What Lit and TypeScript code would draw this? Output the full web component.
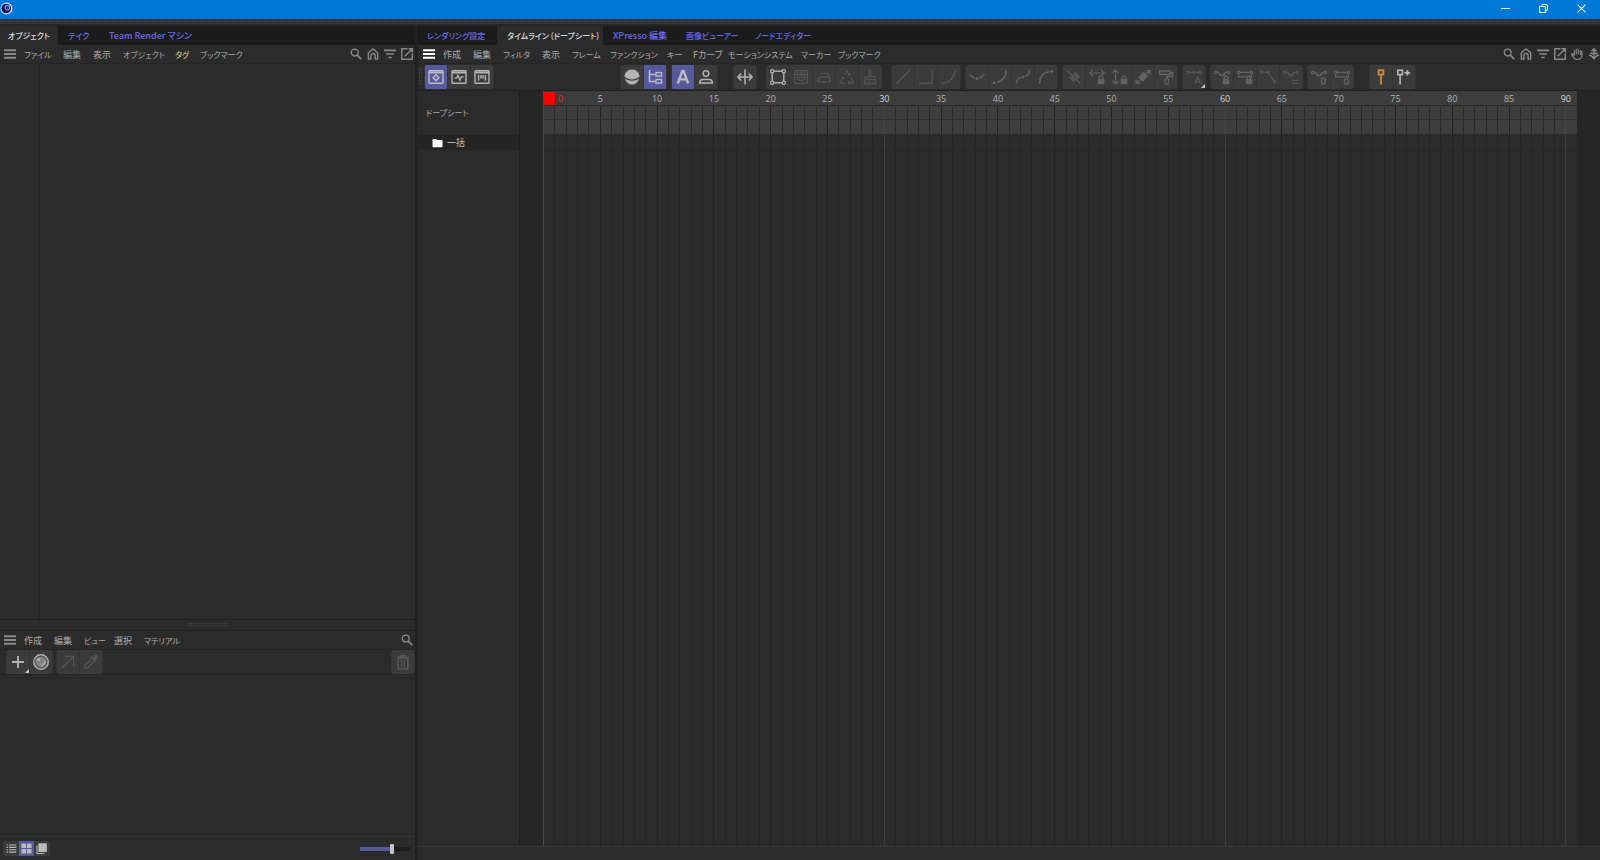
import { LitElement, html, css, svg, nothing } from "lit";
import { customElement, property, state } from "lit/decorators.js";
import { classMap } from "lit/directives/class-map.js";

const key = svg`<circle cx="1.6" cy="3.4" r="1.2"/><circle cx="14.4" cy="3.4" r="1.2"/>`;
const lock = svg`<rect class="f" x="8.6" y="10" width="6.8" height="5.2" rx="1"/><path d="M10.2 10V8.6a1.8 1.8 0 0 1 3.6 0V10" stroke-width="1.3"/>`;
const frame = svg`<rect x="1" y="1.8" width="14" height="12.4" rx="0.8" stroke-width="1.4"/><path d="M1 3.4h14" stroke-width="2"/>`;
const dip = svg`<path d="M2.8 3.4h2.4M10.8 3.4h2.4"/><path d="M4.8 3.8Q8 9.4 11.2 3.8" stroke-width="1.8"/>`;

const icons: Record<string, unknown> = {
  menu: svg`<path d="M0 3h16M0 8h16M0 13h16" stroke-width="2.4"/>`,
  search: svg`<circle cx="6.3" cy="6" r="4.6" stroke-width="1.8"/><path d="M9.6 9.4l5.4 5.4" stroke-width="2.2"/>`,
  home: svg`<path d="M1.8 14.8V6.4L8 1.2l6.2 5.2v8.4h-3.4v-4.6a2.8 2.8 0 0 0-5.6 0v4.6z" stroke-width="1.9"/>`,
  filter: svg`<path d="M0 3.2h16M3 8h10M5.8 12.6h4.4" stroke-width="2.2"/>`,
  open: svg`<path d="M8.6 1H1v14h14V7.4M10 1h5v5M14.8 1.2L5 11" stroke-width="1.9"/>`,
  hand: svg`<path d="M4.4 9.6V3.4M7 8V1.4M9.8 8V1.4M12.6 8.6V3.4" stroke-width="1.5" stroke-linecap="round"/><path d="M4.4 9.8L1.8 7.6Q.4 8 1 9.2l3 4.4q1.4 1.6 4 1.6 6.6 0 6.6-6V5q-.8-1-1.8 0" stroke-width="1.6"/>`,
  dock: svg`<path d="M8 1v13.5M4.8 4.2L8 1l3.2 3.2M3 7.4h10M1.4 9.8q2.6-.6 6.6 4.6 4-5.2 6.6-4.6" stroke-width="1.9"/>`,
  dope: svg`${frame}<path d="M8 5.8l2.9 2.9L8 11.6 5.1 8.7z" stroke-width="1.5"/>`,
  fcurve: svg`${frame}<path d="M3.4 9.2h2L7 6.2l2 5 1.4-3.4h2.2" stroke-width="1.3"/>`,
  motion: svg`${frame}<path d="M4.6 6v5.6M11.4 6v5.6M7 6v3.6M9 6v3.6" stroke-width="1.4"/>`,
  ball: svg`<path class="f" d="M.5 7.6a7.5 7.2 0 0 1 15 0Q13 10.4 8 10.4T.5 7.6z"/><path class="f" d="M.9 9.6q3 2.2 7.1 2.2t7.1-2.2Q13.4 15.6 8 15.6T.9 9.6z"/>`,
  tree: svg`<path d="M2.5 1v11.5h6M2.5 5.5h6" stroke-width="1.6"/><rect x="9" y="3.5" width="5.5" height="3.6" stroke-width="1.4"/><rect x="9" y="10.5" width="5.5" height="3.6" stroke-width="1.4"/>`,
  auto: svg`<path d="M2.8 14.5L7.4 2h1.2l4.6 12.5M4.8 10.4h6.4" stroke-width="2.4"/>`,
  person: svg`<circle cx="8" cy="4.6" r="2.8" stroke-width="1.5"/><path d="M1.6 14q0-3.6 3.6-3.6h5.6q3.6 0 3.6 3.6z" stroke-width="1.5"/>`,
  split: svg`<path d="M8 .6v14.8M1 8h14M4.2 4.6L.9 8l3.3 3.4M11.8 4.6L15.1 8l-3.3 3.4" stroke-width="1.5"/>`,
  region: svg`<rect x="2.2" y="2.2" width="11.6" height="11.6" stroke-width="1.4"/><g class="k"><circle cx="2.2" cy="2.2" r="1.6"/><circle cx="13.8" cy="2.2" r="1.6"/><circle cx="2.2" cy="13.8" r="1.6"/><circle cx="13.8" cy="13.8" r="1.6"/></g>`,
  oven: svg`<rect x="1.6" y="1.6" width="12.8" height="12.8" rx="1"/><path d="M1.6 5.6h12.8"/><path d="M4 3.6h1.6M7.2 3.6h1.6M10.4 3.6H12" stroke-width="1.6"/><path d="M4.4 8.2h7.2v2q-3.6 2.4-7.2 0z"/>`,
  iron: svg`<path d="M1.4 12.8q.4-4.6 5-4.8h7l1 4.8zM5 4.2h6.6q1 0 1.2 1l.6 2.8" stroke-width="1.3"/>`,
  recycle: svg`<path d="M5.4 6.2L8 1.8l2.6 4.4M8.8 5.6l2 .8.4-2.2M4 8.4L1.2 13.8h5.2M2.4 9l1.8-.8.8 1.6M12 8.4l2.8 5.4H9.6M11.2 12l-1.8 1.8 1.8 1.6"/>`,
  broom: svg`<path d="M7 1h2v6.6H7zM3 7.8h10v2.8H3zM3 10.8L2.4 15h11.2L13 10.8M5.4 12.6V15M8 12.6V15M10.6 12.6V15"/>`,
  line: svg`<path d="M1.4 14.6L14.6 1.4" stroke-width="1.4"/>`,
  step: svg`<path d="M1 14.2h13.2V1.4" stroke-width="1.5"/>`,
  ease: svg`<path d="M1.4 14.4Q11.4 14 14.6 1.4" stroke-width="1.5"/>`,
  valley: svg`<path d="M.6 5Q3 8 5.8 9.2M10.2 9.2q2.8-1.2 5.2-4.2" stroke-width="1.5"/><circle class="f" cx="8" cy="9.8" r="1.4"/>`,
  easeout: svg`<path d="M5 13.2Q13.6 12 14.4 1.4" stroke-width="1.5"/><circle class="f" cx="2.2" cy="13.8" r="1.5"/>`,
  scurve: svg`<path d="M1.4 14.6Q2 9 5.8 8.4M10.2 7.4Q14 6.4 14.6 1.4" stroke-width="1.5"/><circle class="f" cx="8" cy="8" r="1.5"/>`,
  easein: svg`<path d="M1.6 14.6Q2 4 11.2 2.8" stroke-width="1.5"/><circle class="f" cx="14" cy="2.2" r="1.5"/>`,
  mute: svg`<path d="M1.4 1.6l13 13" stroke-width="1.6"/><path class="f" d="M9.2 2.6L7.4 6l4.2 4.2 2.4-2.6zM2.4 7.4l3.6-.2 4 4-2.6 2.6z"/>`,
  lockh: svg`<path d="M.8 4h14.4M3.8 1L.8 4l3 3M12.2 1l3 3-3 3"/>${lock}`,
  lockv: svg`<path d="M3.6 1v14M.6 4l3-3 3 3M.6 12l3 3 3-3"/>${lock}`,
  swap: svg`<path class="f" d="M8.5 2.4l4.7 4.4-5.6 6.4-4.8-4.6z"/><path d="M10.8 1.6h4v4M1.2 10.4v4h4M14.6 1.8l-3 3M1.4 14.2l3-3" stroke-width="1.4"/>`,
  roller: svg`<path d="M1.6 2h10.6v3.6H1.6zM12.2 3.6h2.4v4H8.8v2" stroke-width="1.5"/><rect x="7.2" y="9.6" width="3.2" height="5.6" rx="1" stroke-width="1.4"/>`,
  keysA: svg`${key}<path d="M3 3.4h10"/><circle class="f" cx="8" cy="3.4" r="1.5"/><path d="M8.8 15l2.8-6.8h.4l2.8 6.8M9.8 12.8h4" stroke-width="1.3"/>`,
  keyslock: svg`${key}${dip}${lock}`,
  spanlock: svg`${key}<path d="M2.8 3.4h10.4M1.6 5.4v2.4h12.8V5.4"/>${lock}`,
  diag: svg`<circle cx="1.6" cy="3.4" r="1.2"/><circle cx="14.4" cy="12.8" r="1.2"/><circle class="f" cx="8" cy="3.4" r="1.6"/><path d="M2.8 3.4h4M8.6 4.4l4.8 7.2"/>`,
  keyseq: svg`${key}${dip}<path d="M8.6 11.4h6.4M8.6 14.4h6.4"/>`,
  keyszero: svg`${key}${dip}<ellipse cx="12.4" cy="12" rx="2" ry="3" stroke-width="1.4"/>`,
  spanzero: svg`${key}<path d="M2.8 3.4h10.4M1.6 5.4v2.4h12.8V5.4"/><ellipse cx="12.4" cy="12.4" rx="2" ry="2.8" stroke-width="1.4"/>`,
  pin: svg`<rect x="5.6" y="1.2" width="4.8" height="4.4" stroke-width="1.8"/><path d="M8 6v9.6" stroke-width="1.8"/>`,
  pinadd: svg`<rect x="1.8" y="1.2" width="4.6" height="4.4" stroke-width="1.6"/><path d="M4.1 6v9.6" stroke-width="1.6"/><path d="M8.6 3.8h5.6M11.4 1v5.6" stroke-width="1.8"/>`,
  plus: svg`<path d="M8 2v12M2 8h12" stroke-width="1.8"/>`,
  material: svg`<circle cx="8" cy="8" r="7.2" stroke-width="1.5"/><circle class="f" cx="8" cy="8" r="5.6" opacity="0.6"/><circle class="f" cx="5.6" cy="5.6" r="1.6"/><path d="M11.8 7q.2 3.4-3.6 4.4"/>`,
  arrow: svg`<path d="M2.4 13.6L13.6 2.4M5 2.4h8.6V11" stroke-width="1.4"/>`,
  dropper: svg`<path d="M8.6 5L2 11.6l-.6 3 3-.6L11 7.4" stroke-width="1.4"/><path class="f" d="M7.4 3.6l5 5 1.2-1.2-1-1L15 4q.6-1.6-.6-2.6T12 1L9.6 3.4l-1-1z"/>`,
  trash: svg`<path d="M2 3.4h12M5.4 3V1.6h5.2V3" stroke-width="1.8"/><rect x="3.2" y="4" width="9.6" height="10.8" stroke-width="1.6"/><path d="M6.6 6v6.8M9.4 6v6.8" stroke-width="1.4"/>`,
  list: svg`<path d="M1 3h2M4.6 3H15M1 6.4h2M4.6 6.4H15M1 9.8h2M4.6 9.8H15M1 13.2h2M4.6 13.2H15" stroke-width="1.6"/>`,
  tiles: svg`<g class="f"><rect x="0.6" y="0.6" width="6.8" height="6.8" rx="1"/><rect x="8.6" y="0.6" width="6.8" height="6.8" rx="1"/><rect x="0.6" y="8.6" width="6.8" height="6.8" rx="1"/><rect x="8.6" y="8.6" width="6.8" height="6.8" rx="1"/></g>`,
  stack: svg`<path d="M1.4 3.6v11.6H12" stroke-width="1.6"/><rect class="f" x="3.4" y="0.4" width="12.4" height="12.8" rx="1"/>`,
  folder: svg`<path class="f" d="M0 2.8q0-1.4 1.2-1.4h4.8l1.6 1.8h7.2Q16 3.2 16 4.6v8.6q0 1.4-1.2 1.4H1.2Q0 14.6 0 13.2z"/>`,
  minimize: svg`<path d="M0 8h16" stroke-width="1.8"/>`,
  restore: svg`<path d="M1 4.6h10.4V15H1zM4.4 4.4q0-3.4 2.6-3.4h5.4q2.6 0 2.6 2.6v5.6q0 2.4-3.4 2.4" stroke-width="1.8"/>`,
  close: svg`<path d="M1 1l14 14M15 1L1 15" stroke-width="1.8"/>`,
};

@customElement("ui-icon")
class UiIcon extends LitElement {
  @property() name = "";
  static styles = css`
    :host { display: block; width: 14px; height: 14px; flex: none; }
    svg { display: block; width: 100%; height: 100%; fill: none; stroke: currentColor; stroke-width: 1.2; overflow: visible; }
    .f { fill: currentColor; stroke: none; }
    .k { fill: #3a3a3a; }
  `;
  render() {
    return html`<svg viewBox="0 0 16 16" aria-hidden="true">${icons[this.name]}</svg>`;
  }
}

type Tool = { icon: string; label: string; kind?: "on" | "off" | "mild" | "orange"; more?: boolean };
const off = (icon: string, label: string): Tool => ({ icon, label, kind: "off" });
const mild = (icon: string, label: string): Tool => ({ icon, label, kind: "mild" });

@customElement("tool-group")
class ToolGroup extends LitElement {
  @property({ attribute: false }) tools: Tool[] = [];
  static styles = css`
    :host { display: flex; flex: none; gap: 1px; height: 24px; padding: 0 1px; background: #343434; border-radius: 3px; overflow: hidden; }
    button { position: relative; display: grid; place-items: center; width: 22px; height: 24px; padding: 0; border: 0; background: #3b3b3b; color: #b4b4b4; }
    ui-icon { width: 16px; height: 16px; }
    .on { background: #565a9c; color: #bcbcc4; }
    .off { color: #545454; }
    .mild { color: #626262; }
    .orange { color: #d08b3e; }
    .more::after { content: ""; position: absolute; right: 0; bottom: 1px; border: 2px solid transparent; border-right-color: #c8c8c8; border-bottom-color: #c8c8c8; }
  `;
  render() {
    return this.tools.map(
      (t) => html`<button class=${classMap({ [t.kind ?? "normal"]: true, more: !!t.more })} aria-label=${t.label}>
        <ui-icon name=${t.icon}></ui-icon>
      </button>`
    );
  }
}

const toolbar: { space: string; tools: Tool[] }[] = [
  { space: "", tools: [{ icon: "dope", label: "ドープシート", kind: "on" }, { icon: "fcurve", label: "Fカーブ" }, { icon: "motion", label: "モーション" }] },
  { space: "far", tools: [{ icon: "ball", label: "全表示" }, { icon: "tree", label: "階層", kind: "on" }] },
  { space: "", tools: [{ icon: "auto", label: "自動モード", kind: "on" }, { icon: "person", label: "キャラクタ" }] },
  { space: "wide", tools: [{ icon: "split", label: "リンク表示" }] },
  { space: "mid", tools: [{ icon: "region", label: "範囲ツール" }, off("oven", "ベイク"), off("iron", "平滑化"), off("recycle", "再利用"), off("broom", "クリーンアップ")] },
  { space: "mid", tools: [off("line", "リニア"), off("step", "ステップ"), off("ease", "スプライン")] },
  { space: "", tools: [mild("valley", "クランプ"), mild("easeout", "イーズアウト"), mild("scurve", "イーズイーズ"), mild("easein", "イーズイン")] },
  { space: "", tools: [off("mute", "ミュート"), mild("lockh", "時間をロック"), mild("lockv", "値をロック"), mild("swap", "入れ替え"), mild("roller", "塗り")] },
  { space: "", tools: [{ ...off("keysA", "自動接線"), more: true }] },
  { space: "", tools: [mild("keyslock", "接線角度をロック"), mild("spanlock", "接線長をロック"), off("diag", "接線を分離"), off("keyseq", "接線を揃える")] },
  { space: "", tools: [mild("keyszero", "ゼロ角度"), mild("spanzero", "ゼロ長")] },
  { space: "wide", tools: [{ icon: "pin", label: "マーカー", kind: "orange" }, { icon: "pinadd", label: "マーカーを追加" }] },
];

const isWide = (s: string) => /^[\u4e00-\u9fff]+$|^[\x00-\x7f]+/.test(s);

@customElement("app-root")
class AppRoot extends LitElement {
  @state() private zoom = 66;

  static styles = css`
    :host { display: flex; flex-direction: column; min-height: 100vh; background: #2b2b2b; color: #acacac; font: 9px/14px "Noto Sans CJK JP", sans-serif; font-feature-settings: "palt"; overflow: hidden; }
    * { box-sizing: border-box; }
    button { font: inherit; color: inherit; background: none; border: 0; padding: 0; text-align: left; white-space: nowrap; }
    .kana { font-size: 8px; }
    .title { display: flex; align-items: center; height: 19px; padding: 0 14px 2px 0; gap: 29px; background: #0078d7; color: #fff; }
    .title .logo { width: 13px; height: 13px; margin-right: auto; }
    .title ui-icon { width: 9px; height: 9px; }
    .strip { height: 7px; background-color: #303030; background-image: linear-gradient(to right, #3a3a3a 50%, transparent 50%); background-size: 2px 7px; border-bottom: 2px solid #262626; }
    .main { display: grid; grid-template-columns: minmax(0, 26fr) minmax(0, 74fr); flex: 1; }
    .left, .right { display: flex; flex-direction: column; min-width: 0; }
    .left { border-right: 1px solid #202020; }
    .right { border-left: 2px solid #222; }
    .tabs { display: grid; height: 19px; background: #1b1b1b; font-weight: 500; }
    .tabs button { padding: 0 0 0 10px; color: #6b6bea; }
    .tabs .first { padding-left: 8px; }
    .tabs .active { background: #2b2b2b; color: #dedede; }
    .t-left { grid-template-columns: 58px 41px auto; }
    .t-right { grid-template-columns: 80px 106px 73px 69px auto; margin-left: -1px; }
    .bar { display: flex; align-items: center; height: 19px; padding: 0 2px 0 4px; border-bottom: 1px solid #252525; }
    .bar > ui-icon, .bar .acts ui-icon { width: 12px; height: 12px; color: #8a8a8a; }
    .bar > .bright { color: #fff; }
    .menus { display: grid; flex: 1; margin-left: 8px; }
    .menus button { padding-top: 1px; }
    .m-obj { grid-template-columns: 39px 30px 30px 52px 25px auto; }
    .m-mat { grid-template-columns: 30px 30px 30px 30px auto; }
    .m-time { grid-template-columns: 30px 30px 39px 30px 38px 57px 26px 35px 73px 37px auto; }
    .menus .tag { color: #dcdc8c; }
    .acts { display: flex; gap: 5px; }
    .right .bar { padding: 0 0 0 5px; }
    .objects { flex: 1; padding-left: 39px; }
    .objects div { height: 100%; border-left: 1px solid #222; }
    .grip { display: grid; place-items: center; height: 12px; border: solid #202020; border-width: 1px 0; }
    .grip span { width: 42px; height: 4px; background-image: conic-gradient(transparent 75%, #484848 0); background-size: 2px 2px; }
    .mat-tools { display: flex; gap: 3px; height: 25px; padding: 0 0 0 6px; border-bottom: 1px solid #242424; }
    .mat-tools .end { margin-left: auto; }
    .materials { height: 161px; }
    .foot { display: flex; align-items: center; justify-content: space-between; height: 24px; padding: 0 5px 0 3px; border-top: 1px solid #333; }
    .views { display: flex; padding: 0 1px; background: #3a3a3a; border-radius: 2px; }
    .views button { display: grid; place-items: center; width: 15px; height: 15px; color: #bababa; }
    .views .on { background: #565a9c; }
    .views ui-icon { width: 11px; height: 11px; }
    input { appearance: none; width: 50px; height: 11px; margin: 0; background: linear-gradient(to right, #565a9c 66%, #1c1c1c 66%) center / 100% 4px no-repeat; border-radius: 2px; }
    input::-webkit-slider-thumb { appearance: none; width: 4px; height: 10px; background: #c4c4c4; border-radius: 1px; }
    .tools { display: flex; gap: 4px; height: 27px; padding: 1px 0 0 1px; border-bottom: 1px solid #202020; }
    .tools .dots { width: 4px; height: 18px; margin: 3px -3px 0 0; background-image: conic-gradient(transparent 75%, #484848 0); background-size: 2px 2px; }
    .tools .mid { margin-left: 5px; }
    .tools .wide { margin-left: 11px; }
    .tools .far { margin-left: 122px; }
    .timeline { display: grid; grid-template-columns: 102px 23px minmax(0, 1fr) 23px; flex: 1; }
    .tracks { border-right: 1px solid #1f1f1f; padding-top: 15px; }
    .tracks .head { height: 29px; padding: 0 8px; line-height: 14px; }
    .tracks .row { display: flex; align-items: center; gap: 4px; height: 15px; padding-left: 14px; background: #242424; color: #c8c8c8; }
    .row ui-icon { width: 11px; height: 10px; color: #fff; }
    .sheet { position: relative; display: flex; flex-direction: column; }
    .gutter, .side { background: #262626; }
    .ruler, .cells, .body { display: flex; }
    .ruler { height: 14px; padding-top: 1px; background: #3d3d3d; color: #b2b2b2; font-family: "Open Sans", sans-serif; }
    .ruler > span { flex: 1; min-width: 0; }
    .ruler b { display: flex; justify-content: center; width: 1px; font-weight: 400; line-height: 14px; }
    .ruler .strong { color: #d4d4d4; font-weight: 500; }
    .ruler .zero { justify-content: flex-start; color: #f22; padding-left: 15px; }
    .cells { height: 15px; background: #3d3d3d; border-bottom: 1px solid #2d2d2d; }
    .cells.top { border-top: 1px solid #2b2b2b; border-bottom-color: #303030; }
    .cells i, .body i { flex: 1; min-width: 0; border-left: 1px solid #2a2a2a; }
    .cells i.five { border-color: #222; }
    .cells i.mark { border-color: #454545; }
    .body { flex: 1; background: linear-gradient(#262626, #262626) 0 15px / 100% 1px no-repeat #2b2b2b; }
    .body i { border-left-color: #252525; }
    .body i.five { border-left-color: #212121; }
    .body i.mark { border-left-color: #3e3e3e; }
    .head-marker { position: absolute; z-index: 1; top: 1px; left: 0; width: 12px; height: 13px; background: #f00; }
    .playline { position: absolute; z-index: 1; top: 0; bottom: 0; left: 0; width: 1px; background: #f00; }
    .status { height: 14px; border-top: 1px solid #363636; }
  `;

  private menuItems(items: string[]) {
    return items.map(
      (m) => html`<button class=${classMap({ kana: !isWide(m), tag: m === "タグ" })}>${m}</button>`
    );
  }

  private tabItems(items: string[], active: number, left: boolean) {
    return items.map(
      (t, i) => html`<button role="tab" aria-selected=${i === active}
        class=${classMap({ active: i === active, first: left && i === 0, kana: !isWide(t) })}>${t}</button>`
    );
  }

  private acts(names: string[]) {
    return html`<div class="acts">${names.map((n) => html`<button aria-label=${n}><ui-icon name=${n}></ui-icon></button>`)}</div>`;
  }

  private cells() {
    return Array.from({ length: 91 }, (_, f) =>
      html`<i class=${classMap({ five: f % 5 === 0 && f % 30 !== 0, mark: f > 0 && f % 30 === 0 })}></i>`
    );
  }

  render() {
    return html`
      <header class="title">
        <svg class="logo" viewBox="0 0 13 13" aria-hidden="true">
          <circle cx="6.5" cy="6.5" r="6" fill="#d8dcf0"/>
          <circle cx="6.2" cy="6.5" r="4.8" fill="#10145c"/>
          <circle cx="7.4" cy="5.6" r="2.8" fill="#8f9ce0"/>
          <circle cx="7.4" cy="5.8" r="1.8" fill="#262c80"/>
        </svg>
        <button aria-label="最小化"><ui-icon name="minimize"></ui-icon></button>
        <button aria-label="元に戻す"><ui-icon name="restore"></ui-icon></button>
        <button aria-label="閉じる"><ui-icon name="close"></ui-icon></button>
      </header>
      <div class="strip"></div>
      <main class="main">
        <section class="left">
          <div class="tabs t-left" role="tablist">
            ${this.tabItems(["オブジェクト", "テイク", "Team Render マシン"], 0, true)}
          </div>
          <div class="bar">
            <ui-icon name="menu"></ui-icon>
            <nav class="menus m-obj">${this.menuItems(["ファイル", "編集", "表示", "オブジェクト", "タグ", "ブックマーク"])}</nav>
            ${this.acts(["search", "home", "filter", "open"])}
          </div>
          <div class="objects"><div></div></div>
          <div class="grip"><span></span></div>
          <div class="bar">
            <ui-icon name="menu"></ui-icon>
            <nav class="menus m-mat">${this.menuItems(["作成", "編集", "ビュー", "選択", "マテリアル"])}</nav>
            ${this.acts(["search"])}
          </div>
          <div class="mat-tools">
            <tool-group .tools=${[{ icon: "plus", label: "新規マテリアル", more: true }, { icon: "material", label: "マテリアル" }]}></tool-group>
            <tool-group .tools=${[off("arrow", "適用"), off("dropper", "スポイト")]}></tool-group>
            <tool-group class="end" .tools=${[off("trash", "削除")]}></tool-group>
          </div>
          <div class="materials"></div>
          <div class="foot">
            <div class="views">
              <button aria-label="リスト"><ui-icon name="list"></ui-icon></button>
              <button class="on" aria-label="グリッド"><ui-icon name="tiles"></ui-icon></button>
              <button aria-label="レイヤー"><ui-icon name="stack"></ui-icon></button>
            </div>
            <input type="range" aria-label="サイズ" .value=${String(this.zoom)}
              @input=${(e: Event) => (this.zoom = Number((e.target as HTMLInputElement).value))}>
          </div>
        </section>
        <section class="right">
          <div class="tabs t-right" role="tablist">
            ${this.tabItems(["レンダリング設定", "タイムライン (ドープシート)", "XPresso 編集", "画像ビューアー", "ノードエディター"], 1, false)}
          </div>
          <div class="bar">
            <ui-icon class="bright" name="menu"></ui-icon>
            <nav class="menus m-time">${this.menuItems(["作成", "編集", "フィルタ", "表示", "フレーム", "ファンクション", "キー", "Fカーブ", "モーションシステム", "マーカー", "ブックマーク"])}</nav>
            ${this.acts(["search", "home", "filter", "open", "hand", "dock"])}
          </div>
          <div class="tools">
            <div class="dots"></div>
            ${toolbar.map((g) => html`<tool-group class=${g.space || nothing} .tools=${g.tools}></tool-group>`)}
          </div>
          <div class="timeline">
            <div class="tracks">
              <div class="head kana">ドープシート</div>
              <div class="row"><ui-icon name="folder"></ui-icon><span>一括</span></div>
            </div>
            <div class="gutter"></div>
            <div class="sheet">
              <div class="ruler">
                ${Array.from({ length: 91 }, (_, f) => html`<span>${f % 5 === 0
                  ? html`<b class=${classMap({ zero: f === 0, strong: f > 0 && f % 30 === 0 })}>${f}</b>` : nothing}</span>`)}
              </div>
              <div class="cells top">${this.cells()}</div>
              <div class="cells">${this.cells()}</div>
              <div class="body">${this.cells()}</div>
              <div class="head-marker"></div>
              <div class="playline"></div>
            </div>
            <div class="side"></div>
          </div>
          <div class="status"></div>
        </section>
      </main>
    `;
  }
}
